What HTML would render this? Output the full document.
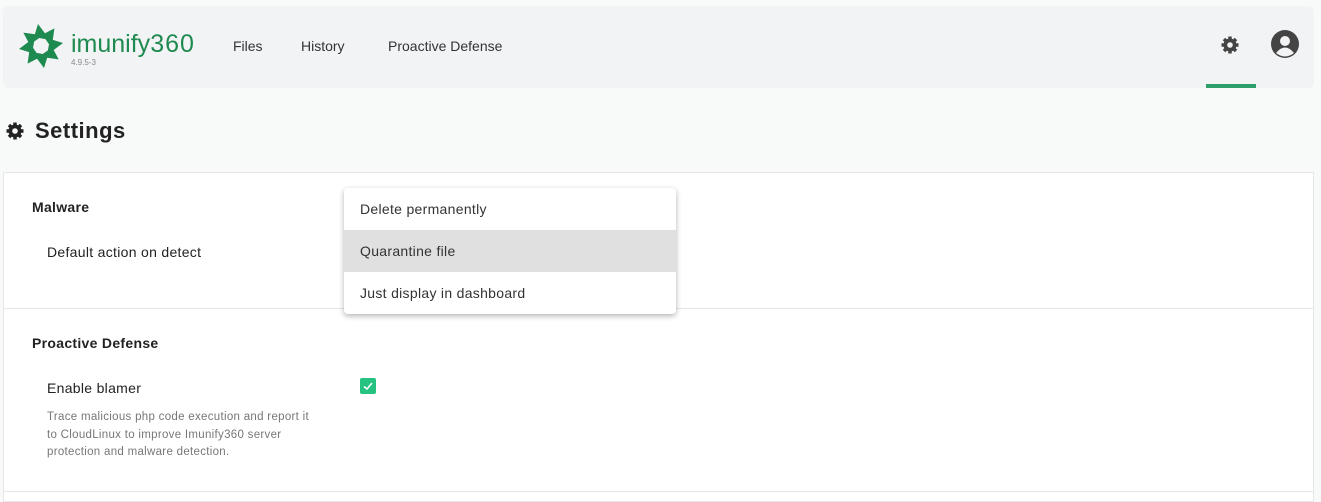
<!DOCTYPE html>
<html><head><meta charset="utf-8"><style>
*{box-sizing:border-box;margin:0;padding:0}
body{width:1321px;height:496px;overflow:hidden;background:#f8f9f9;font-family:"Liberation Sans","DejaVu Sans",sans-serif;color:#222;position:relative}
.hdr{position:absolute;left:3px;top:6px;width:1311px;height:82px;background:#f2f3f5;border-radius:6px}
.nav{position:absolute;top:32px;font-size:14px;color:#333}
.card{position:absolute;left:3px;top:172px;width:1311px;height:330px;background:#fff;border:1px solid #e6e6e6}
.sep{position:absolute;left:0;right:0;height:1px;background:#e6e6e6}
.t{position:absolute;font-size:14px;letter-spacing:0.3px}
.dd{position:absolute;left:344px;top:188px;width:332px;height:126px;background:#fff;border-radius:4px;box-shadow:0 2px 6px rgba(0,0,0,.3)}
.dd div{height:42px;line-height:42px;padding-left:16px;font-size:14px;color:#333;letter-spacing:0.3px}
</style></head><body>
<div class="hdr">
<svg style="position:absolute;left:15px;top:17px" width="46" height="46" viewBox="-23 -23 46 46">
<g fill="#1f8a4f">
<polygon points="-3,-22 9,-6 -7,-9" transform="rotate(0)"/>
<polygon points="-3,-22 9,-6 -7,-9" transform="rotate(45)"/>
<polygon points="-3,-22 9,-6 -7,-9" transform="rotate(90)"/>
<polygon points="-3,-22 9,-6 -7,-9" transform="rotate(135)"/>
<polygon points="-3,-22 9,-6 -7,-9" transform="rotate(180)"/>
<polygon points="-3,-22 9,-6 -7,-9" transform="rotate(225)"/>
<polygon points="-3,-22 9,-6 -7,-9" transform="rotate(270)"/>
<polygon points="-3,-22 9,-6 -7,-9" transform="rotate(315)"/>
</g><circle r="7" fill="#f2f3f5"/></svg>
<div style="position:absolute;left:68px;top:24px;font-size:25px;color:#1f8a4f;letter-spacing:0px">imunify<span style="letter-spacing:1px">360</span></div>
<div style="position:absolute;left:68px;top:52px;font-size:8px;color:#888">4.9.5-3</div>
<div class="nav" style="left:230px">Files</div>
<div class="nav" style="left:298px">History</div>
<div class="nav" style="left:385px">Proactive Defense</div>
<svg style="position:absolute;left:1217px;top:29px" width="20" height="20" viewBox="0 0 20 20"><g fill="#444"><circle cx="10" cy="10" r="6.5"/><g stroke="#444" stroke-width="3.5"><line x1="10" y1="1.5" x2="10" y2="18.5"/><line x1="1.5" y1="10" x2="18.5" y2="10"/><line x1="4" y1="4" x2="16" y2="16"/><line x1="16" y1="4" x2="4" y2="16"/></g></g><circle cx="10" cy="10" r="2.8" fill="#f2f3f5"/></svg>
<svg style="position:absolute;left:1268px;top:24px" width="28" height="28" viewBox="0 0 28 28"><circle cx="14" cy="14" r="14" fill="#444"/><circle cx="14" cy="11" r="5" fill="#f2f3f5"/><path d="M5 23 Q14 12 23 23 Q14 30 5 23Z" fill="#f2f3f5"/></svg>
<div style="position:absolute;left:1203px;top:78px;width:50px;height:4px;background:#2e9e6a"></div>
</div>
<svg style="position:absolute;left:5px;top:121px" width="20" height="20" viewBox="0 0 20 20"><g stroke="#222" stroke-width="3.5"><line x1="10" y1="1.5" x2="10" y2="18.5"/><line x1="1.5" y1="10" x2="18.5" y2="10"/><line x1="4" y1="4" x2="16" y2="16"/><line x1="16" y1="4" x2="4" y2="16"/></g><circle cx="10" cy="10" r="6.5" fill="#222"/><circle cx="10" cy="10" r="2.8" fill="#f8f9f9"/></svg>
<div style="position:absolute;left:35px;top:118px;font-size:22px;font-weight:bold;color:#222;letter-spacing:0.5px">Settings</div>
<div class="card">
<div class="t" style="left:28px;top:26px;font-weight:bold">Malware</div>
<div class="t" style="left:43px;top:71px">Default action on detect</div>
<div class="sep" style="top:135px"></div>
<div class="t" style="left:28px;top:162px;font-weight:bold">Proactive Defense</div>
<div class="t" style="left:43px;top:207px">Enable blamer</div>
<div style="position:absolute;left:43px;top:236px;font-size:11.5px;line-height:17.5px;color:#777;width:320px;letter-spacing:0.3px">Trace malicious php code execution and report it<br>to CloudLinux to improve Imunify360 server<br>protection and malware detection.</div>
<div style="position:absolute;left:356px;top:205px;width:16px;height:16px;background:#26c281;border-radius:2px"><svg width="16" height="16"><path d="M4 8.5 L7 11 L12 5" stroke="#fff" stroke-width="1.6" fill="none"/></svg></div>
<div class="sep" style="top:318px"></div>
</div>
<div class="dd"><div>Delete permanently</div><div style="background:#e0e0e0">Quarantine file</div><div>Just display in dashboard</div></div>
</body></html>
